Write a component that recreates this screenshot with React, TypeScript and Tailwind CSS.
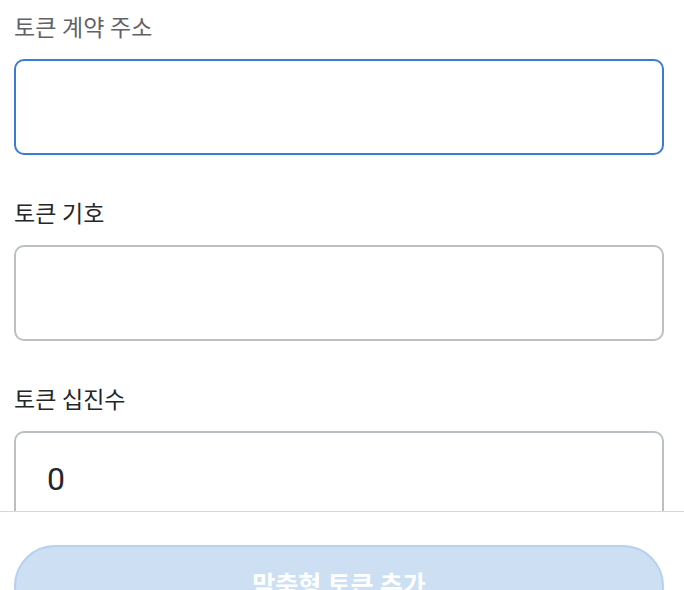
const fields = [
  { label: '토큰 계약 주소', value: '', focused: true },
  { label: '토큰 기호', value: '', focused: false },
  { label: '토큰 십진수', value: '0', focused: false },
];

const App = () => {
  return (
    <div
      className="w-[684px] h-[590px] overflow-hidden bg-white flex flex-col"
      style={{ fontFamily: 'Roboto, "Noto Sans CJK KR", sans-serif' }}
    >
      <div className="h-[511px] shrink-0 overflow-hidden pl-[14px] pr-[20px] pt-[13px] flex flex-col gap-[44px]">
        {fields.map((f) => (
          <div key={f.label} className="flex flex-col">
            <label
              className={`text-[23px] leading-[32px] mb-[14px] ${
                f.focused ? 'text-[#5f6266]' : 'text-[#24272a]'
              }`}
            >
              {f.label}
            </label>
            <div
              className={`h-[96px] shrink-0 rounded-[10px] border-2 flex items-center pl-[31px] ${
                f.focused ? 'border-[#3a7bd4]' : 'border-[#bbc0c5]'
              }`}
            >
              <span className="text-[32px] text-[#24272a]">{f.value}</span>
            </div>
          </div>
        ))}
      </div>
      <div className="border-t border-[#d6d9dc] pl-[14px] pr-[20px] pt-[33px]">
        <button className="w-full h-[82px] rounded-full bg-[#cddff3] border-2 border-[#b5d0f0] text-white text-[25px] font-bold">
          맞춤형 토큰 추가
        </button>
      </div>
    </div>
  );
};

export default App;
